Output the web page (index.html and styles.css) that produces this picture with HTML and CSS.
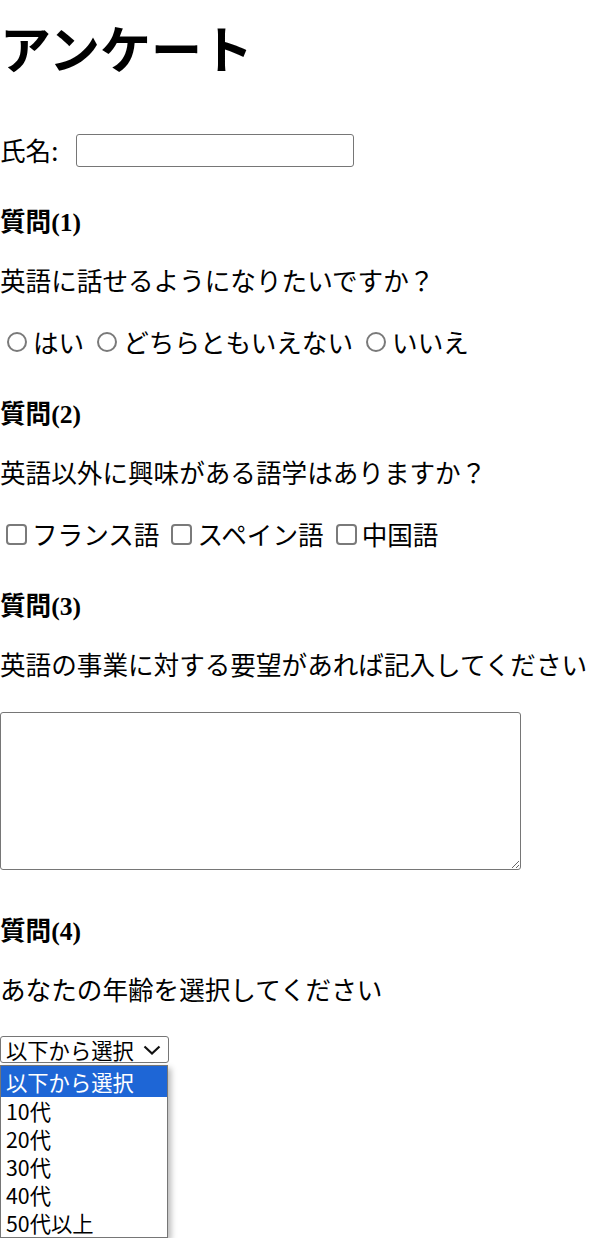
FILE: index.html
```html
<!DOCTYPE html>
<html lang="ja">

<head>
	<title>アンケート</title>
	<meta charset="utf-8"/>
	<meta name="viewport" content="width=device-width, initial-scale=1"/>

	<link rel="stylesheet" href="styles.css">
</head>

<body>
	<h1 class="title">アンケート</h1>

	<form class="survey">
		<p class="name-row">
			<label for="name">氏名:</label>
			<input type="text" id="name" class="name-input">
		</p>

		<h4 class="q-title">質問(1)</h4>
		<p class="q-text">英語に話せるようになりたいですか？</p>
		<div class="choices">
			<label class="choice"><input type="radio" name="q1" class="radio">はい</label>
			<label class="choice"><input type="radio" name="q1" class="radio">どちらともいえない</label>
			<label class="choice"><input type="radio" name="q1" class="radio">いいえ</label>
		</div>

		<h4 class="q-title">質問(2)</h4>
		<p class="q-text">英語以外に興味がある語学はありますか？</p>
		<div class="choices">
			<label class="choice"><input type="checkbox" class="check">フランス語</label>
			<label class="choice"><input type="checkbox" class="check">スペイン語</label>
			<label class="choice"><input type="checkbox" class="check">中国語</label>
		</div>

		<h4 class="q-title">質問(3)</h4>
		<p class="q-text">英語の事業に対する要望があれば記入してください</p>
		<textarea class="answer-box"></textarea>

		<h4 class="q-title">質問(4)</h4>
		<p class="q-text">あなたの年齢を選択してください</p>
		<div class="age-box">
			<div class="select-wrap">
				<select class="age-select">
					<option>以下から選択</option>
					<option>10代</option>
					<option>20代</option>
					<option>30代</option>
					<option>40代</option>
					<option>50代以上</option>
				</select>
				<svg class="chevron" width="18" height="10" viewBox="0 0 18 10">
					<path d="M1.5 1.5 L9 8.5 L16.5 1.5" fill="none" stroke="#111" stroke-width="2.2"/>
				</svg>
			</div>
			<!-- the opened list of the select -->
			<div class="age-list">
				<div class="age-item current">以下から選択</div>
				<div class="age-item">10代</div>
				<div class="age-item">20代</div>
				<div class="age-item">30代</div>
				<div class="age-item">40代</div>
				<div class="age-item">50代以上</div>
			</div>
		</div>
	</form>
</body>
</html>
```

FILE: styles.css
```css
body {
	margin: 0;
	background: #fff;
	color: #000;
	font-family: "Noto Sans CJK JP", sans-serif;
	font-size: 25.6px;
	line-height: 32px;
}

.title {
	margin: 22px 0 0;
	font-family: "Liberation Serif", "Noto Sans CJK JP", serif;
	font-size: 51px;
	line-height: 60px;
	font-weight: bold;
}

.name-row {
	display: flex;
	align-items: center;
	height: 34px;
	margin: 51px 0 0;
}

.name-input {
	flex: none;
	box-sizing: border-box;
	width: 278px;
	height: 33px;
	margin-left: 18px;
	border: 1px solid #767676;
	border-radius: 3px;
	font-size: 21px;
	padding: 0 4px;
}

.q-title {
	margin: 40px 0 0;
	font-family: "Liberation Serif", "Noto Sans CJK JP", serif;
	font-size: 25.6px;
	line-height: 32px;
	font-weight: bold;
}

.q-text {
	margin: 25px 0 0;
}

.choices {
	display: flex;
	align-items: center;
	gap: 6px;
	height: 34px;
	margin-top: 29px;
}

.choice {
	display: inline-flex;
	align-items: center;
}

.radio, .check {
	appearance: none;
	-webkit-appearance: none;
	flex: none;
	box-sizing: border-box;
	margin: 0;
	background: #fff;
	border: 2px solid #7a7a7a;
}

.radio {
	width: 20px;
	height: 20px;
	margin: 0 6px 0 7px;
	border-radius: 50%;
}

.check {
	width: 21px;
	height: 21px;
	margin: 0 5px 0 6px;
	border-radius: 4px;
}

.answer-box {
	display: block;
	box-sizing: border-box;
	width: 521px;
	height: 158px;
	margin: 32px 0 46px;
	border: 1px solid #767676;
	border-radius: 3px;
}

.answer-box + .q-title {
	margin-top: 46px;
}

.age-box {
	width: 169px;
	margin-top: 31px;
}

.select-wrap {
	position: relative;
}

.age-select {
	appearance: none;
	-webkit-appearance: none;
	display: block;
	box-sizing: border-box;
	width: 169px;
	height: 27px;
	margin: 0;
	padding: 0 0 0 5px;
	border: 1px solid #767676;
	border-radius: 3px;
	background: #fff;
	color: #000;
	font-family: "Noto Sans CJK JP", sans-serif;
	font-size: 21.3px;
	line-height: 25px;
}

.chevron {
	position: absolute;
	left: 143px;
	top: 9px;
}

.age-list {
	box-sizing: border-box;
	width: 168px;
	margin-top: 2px;
	background: #fff;
	border: 1px solid #767676;
	box-shadow: 3px 3px 6px rgba(0, 0, 0, 0.28);
	font-size: 21.3px;
}

.age-item {
	height: 28px;
	line-height: 28px;
	padding-left: 5px;
	white-space: nowrap;
}

.age-item.current {
	height: 31px;
	line-height: 31px;
	background: #1e66d6;
	color: #fff;
}
```
